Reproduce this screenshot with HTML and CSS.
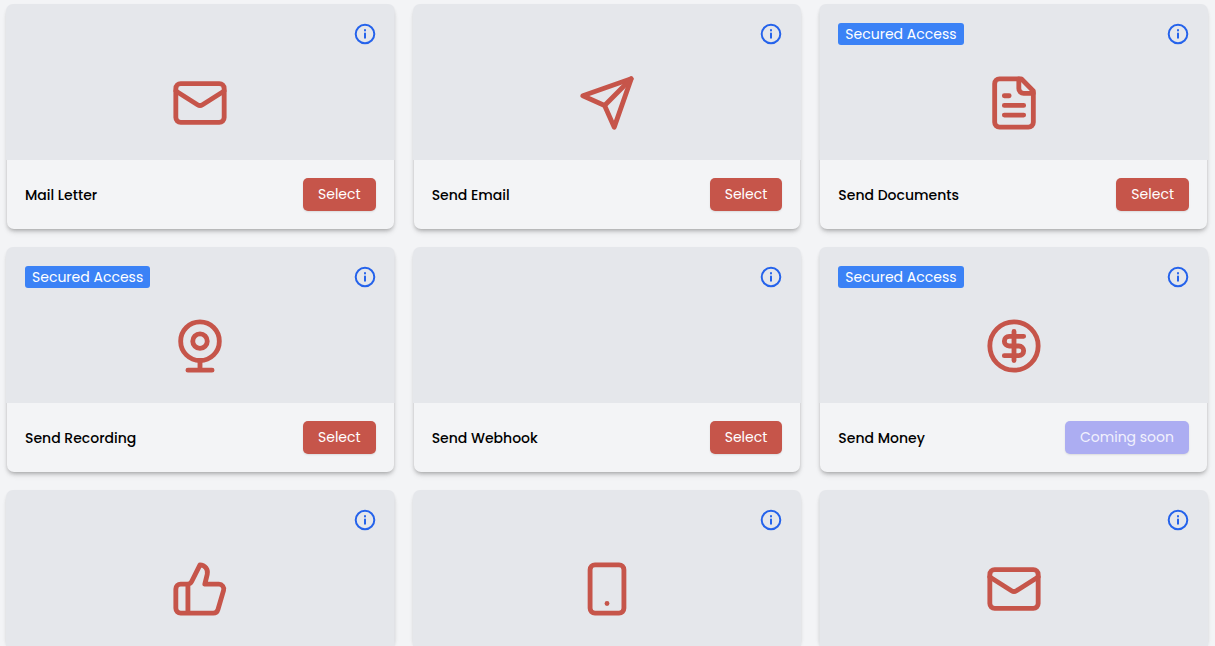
FILE: index.html
```html
<!DOCTYPE html>
<html lang="en">
<head>
<meta charset="utf-8">
<meta name="viewport" content="width=device-width, initial-scale=1">
<title>Actions</title>
<link rel="stylesheet" href="styles.css">
</head>
<body>
<svg class="sprite" aria-hidden="true">
  <symbol id="info" viewBox="0 0 22 22"><circle cx="11" cy="11" r="9.3"/><path d="M11 10.4v4.4M11 7.1v.4"/></symbol>
  <symbol id="mail" viewBox="0 0 24 24"><rect x="2" y="4" width="20" height="16" rx="2"/><path d="m22 7-8.97 5.7a1.94 1.94 0 0 1-2.06 0L2 7"/></symbol>
</svg>
<main class="grid">
  <article class="card">
    <div class="card-top">
      <div class="card-bar"><button class="info" aria-label="About Mail Letter"><svg><use href="#info"/></svg></button></div>
      <svg class="icon" viewBox="0 0 24 24"><use href="#mail"/></svg>
    </div>
    <div class="card-foot"><h2>Mail Letter</h2><button class="btn">Select</button></div>
  </article>
  <article class="card">
    <div class="card-top">
      <div class="card-bar"><button class="info" aria-label="About Send Email"><svg><use href="#info"/></svg></button></div>
      <svg class="icon" viewBox="0 0 24 24"><path d="m22 2-7 20-4-9-9-4Z"/><path d="M22 2 11 13"/></svg>
    </div>
    <div class="card-foot"><h2>Send Email</h2><button class="btn">Select</button></div>
  </article>
  <article class="card">
    <div class="card-top">
      <div class="card-bar"><span class="badge">Secured Access</span><button class="info" aria-label="About Send Documents"><svg><use href="#info"/></svg></button></div>
      <svg class="icon" viewBox="0 0 24 24"><path d="M15 2H6a2 2 0 0 0-2 2v16a2 2 0 0 0 2 2h12a2 2 0 0 0 2-2V7Z"/><path d="M14 2v4a2 2 0 0 0 2 2h4M10 9H8M16 13H8M16 17H8"/></svg>
    </div>
    <div class="card-foot"><h2>Send Documents</h2><button class="btn">Select</button></div>
  </article>
  <article class="card">
    <div class="card-top">
      <div class="card-bar"><span class="badge">Secured Access</span><button class="info" aria-label="About Send Recording"><svg><use href="#info"/></svg></button></div>
      <svg class="icon" viewBox="0 0 24 24"><circle cx="12" cy="10" r="8"/><circle cx="12" cy="10" r="3"/><path d="M7 22h10M12 22v-4"/></svg>
    </div>
    <div class="card-foot"><h2>Send Recording</h2><button class="btn">Select</button></div>
  </article>
  <article class="card">
    <div class="card-top">
      <div class="card-bar"><button class="info" aria-label="About Send Webhook"><svg><use href="#info"/></svg></button></div>
    </div>
    <div class="card-foot"><h2>Send Webhook</h2><button class="btn">Select</button></div>
  </article>
  <article class="card">
    <div class="card-top">
      <div class="card-bar"><span class="badge">Secured Access</span><button class="info" aria-label="About Send Money"><svg><use href="#info"/></svg></button></div>
      <svg class="icon" viewBox="0 0 24 24"><circle cx="12" cy="12" r="10"/><path d="M16 8h-6a2 2 0 1 0 0 4h4a2 2 0 1 1 0 4H8M12 18V6"/></svg>
    </div>
    <div class="card-foot"><h2>Send Money</h2><button class="btn" disabled>Coming soon</button></div>
  </article>
  <article class="card">
    <div class="card-top">
      <div class="card-bar"><button class="info" aria-label="More information"><svg><use href="#info"/></svg></button></div>
      <svg class="icon" viewBox="0 0 24 24"><path d="M7 10v12M15 5.88 14 10h5.83a2 2 0 0 1 1.92 2.56l-2.33 8A2 2 0 0 1 17.5 22H4a2 2 0 0 1-2-2v-8a2 2 0 0 1 2-2h2.76a2 2 0 0 0 1.79-1.11L12 2a3.13 3.13 0 0 1 3 3.88Z"/></svg>
    </div>
  </article>
  <article class="card">
    <div class="card-top">
      <div class="card-bar"><button class="info" aria-label="More information"><svg><use href="#info"/></svg></button></div>
      <svg class="icon" viewBox="0 0 24 24"><rect x="5" y="2" width="14" height="20" rx="2"/><path d="M12 18h.01"/></svg>
    </div>
  </article>
  <article class="card">
    <div class="card-top">
      <div class="card-bar"><button class="info" aria-label="More information"><svg><use href="#info"/></svg></button></div>
      <svg class="icon" viewBox="0 0 24 24"><use href="#mail"/></svg>
    </div>
  </article>
</main>
</body>
</html>
```
FILE: styles.css
```css
* { box-sizing: border-box; }

body {
  margin: 0;
  height: 100vh;
  overflow: hidden;
  background: #f3f4f6;
  color: #000;
  font: 14px/22px Poppins, Inter, sans-serif;
}

.sprite { position: absolute; width: 0; height: 0; }

svg {
  fill: none;
  stroke: currentColor;
  stroke-width: 2;
  stroke-linecap: round;
  stroke-linejoin: round;
}

.grid {
  display: grid;
  grid-template-columns: repeat(3, minmax(0, 1fr));
  gap: 19px 20px;
  padding: 5px 8px 5px 7px;
}

.card {
  border-radius: 7px;
  background: #f3f4f6;
  box-shadow: 0 4px 6px -1px rgba(0, 0, 0, .1), 0 2px 4px -1px rgba(0, 0, 0, .3);
}

.card-top {
  display: flex;
  flex-direction: column;
  height: 155px;
  padding: 18px;
  border-radius: 6px 6px 0 0;
  background: #e5e7eb;
  box-shadow: 0 0 0 1px #e5e7eb;
  clip-path: inset(-1px -1px 0 -1px);
}

.card-bar {
  display: flex;
  align-items: center;
  justify-content: space-between;
}

.badge {
  padding: 0 7px;
  border-radius: 3px;
  background: #3b82f6;
  color: #fff;
}

.info {
  display: block;
  width: 22px;
  height: 22px;
  margin-left: auto;
  padding: 0;
  border: 0;
  background: none;
  color: #2563eb;
}

.info svg { display: block; width: 22px; height: 22px; }

.icon {
  width: 58px;
  height: 58px;
  margin: 29px auto 0;
  color: #c6554a;
}

.card-foot {
  display: flex;
  align-items: center;
  justify-content: space-between;
  padding: 18px;
}

h2 {
  margin: 0;
  font-size: 14px;
  font-weight: 500;
}

.btn {
  padding: 5px 15px 6px;
  border: 0;
  border-radius: 5px;
  background: #c6554a;
  box-shadow: 0 1px 2px rgba(0, 0, 0, .1);
  color: #fff;
  font: inherit;
}

.btn:disabled { background: #acadf2; color: #f1f1fd; }
```
